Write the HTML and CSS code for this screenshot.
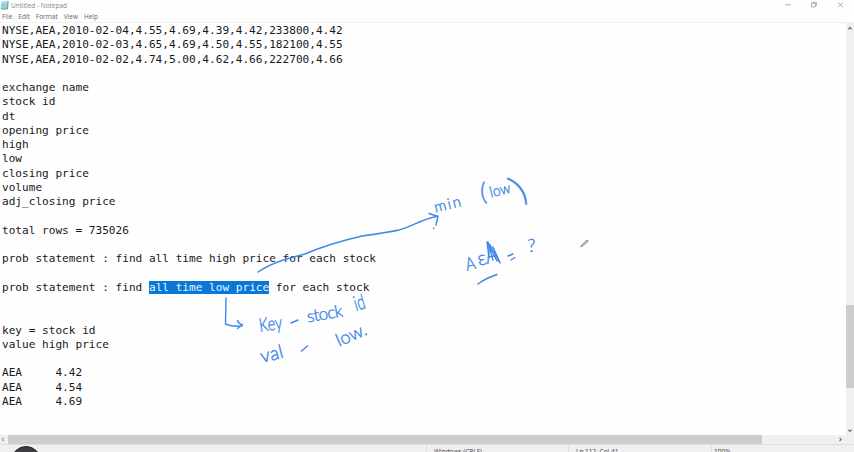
FILE: index.html
```html
<!DOCTYPE html>
<html lang="en">
<head>
<meta charset="utf-8">
<title>Untitled - Notepad</title>
<link rel="stylesheet" href="styles.css">
</head>
<body>
<div class="window">
  <header class="titlebar">
    <svg class="app-icon" width="9" height="10" viewBox="0 0 9 10"><path d="M1.5 1.2 8 .8 7.4 8.8 .6 8.4z" fill="#91cfe0"/><path d="M1.8 2h6" stroke="#d9edf2"/><path d="M8.2 1 7.5 9 1 8.9" fill="none" stroke="#5c7880" stroke-width=".8"/></svg>
    <span class="title">Untitled - Notepad</span>
    <svg class="controls" width="70" height="11" viewBox="0 0 70 11" fill="none" stroke="#999" stroke-width=".8"><path d="M1.5 4.8h5.500M27.500 3.200h3.700v3.800h-3.700zM28.700 3V2.200h3.600V6h-1M54 2.300l5 5M59 2.300l-5 5"/></svg>
  </header>
  <nav class="menu"><span>File</span><span>Edit</span><span>Format</span><span>View</span><span>Help</span></nav>
  <div class="body">
    <pre class="editor">NYSE,AEA,2010-02-04,4.55,4.69,4.39,4.42,233800,4.42
NYSE,AEA,2010-02-03,4.65,4.69,4.50,4.55,182100,4.55
NYSE,AEA,2010-02-02,4.74,5.00,4.62,4.66,222700,4.66

exchange name
stock id
dt
opening price
high
low
closing price
volume
adj_closing price

total rows = 735026

prob statement : find all time high price for each stock

prob statement : find <span class="selected">all time low price</span> for each stock


key = stock id
value high price

AEA	4.42
AEA	4.54
AEA	4.69</pre>
    <div class="vscroll">
      <svg width="8" height="10" viewBox="0 0 8 10"><path d="M2.3 6.200 4 4.500l1.700 1.700" fill="none" stroke="#777" stroke-width="1.300"/></svg>
      <div class="vthumb"></div>
      <svg width="8" height="10" viewBox="0 0 8 10"><path d="M2.3 4.700 4 6.400l1.700-1.700" fill="none" stroke="#777" stroke-width="1.300"/></svg>
    </div>
  </div>
  <div class="hscroll">
    <svg width="8" height="9" viewBox="0 0 8 9"><path d="M3.8 2.800 2.200 4.500l1.600 1.700" fill="none" stroke="#777"/></svg>
    <div class="hthumb"></div>
    <svg class="right" width="8" height="9" viewBox="0 0 8 9"><path d="M2.500 2.800l1.700 1.700L2.500 6.200" fill="none" stroke="#777" stroke-width="1.200"/></svg>
  </div>
  <footer class="status">
    <span class="bubble"></span>
    <span class="cell enc">Windows (CRLF)</span>
    <span class="cell pos">Ln 112, Col 41</span>
    <span class="cell zoom">100%</span>
  </footer>
  <svg class="ink" width="854" height="452" viewBox="0 0 854 452">
    <g class="strokes">
      <path d="M258 272C273 262 289 258 305 254Q328 244 362 236C377 234 390 232 399 230C411 227 422 219 438 216M429 213.500L438 216.500L436 225M433.500 228.200h.5"/>
      <path d="M226 298L225.500 324Q232 327 242 326M237.500 320.500Q239 324 242.500 325L237.500 328.500"/>
      <path d="M478 284Q486 278 497 274.500M508 256l5-2M511 260l4-2.500M487 242l2 15M488 242l5 18M489 245l8 16M493 247l7 16"/>
      <path d="M291 323l7-3M301.500 351l6-5"/>
    </g>
    <g class="words">
      <text transform="translate(435.500 212.500) rotate(-14)" font-size="15" textLength="27">min</text>
      <text transform="translate(481 201) rotate(-6)" font-size="25">(</text>
      <text transform="translate(491 197.500) rotate(-14)" font-size="15" textLength="21" lengthAdjust="spacingAndGlyphs">low</text>
      <text transform="translate(522 202) rotate(-36)" font-size="37">)</text>
      <text transform="translate(467 271) rotate(-14)" font-size="18" textLength="10" lengthAdjust="spacingAndGlyphs">A</text>
      <text transform="translate(479 266) rotate(-14)" font-size="20">ε</text>
      <text transform="translate(487 264) rotate(-12)" font-size="27" textLength="13" lengthAdjust="spacingAndGlyphs">A</text>
      <text transform="translate(528 252) rotate(-3)" font-size="18">?</text>
      <text transform="translate(260 332) rotate(-8)" font-size="19" textLength="23" lengthAdjust="spacingAndGlyphs">Key</text>
      <text transform="translate(308 322.500) rotate(-10)" font-size="17" textLength="36">stock</text>
      <text transform="translate(356 311) rotate(-16)" font-size="21" textLength="11" lengthAdjust="spacingAndGlyphs">id</text>
      <text transform="translate(262 363) rotate(-14)" font-size="19" textLength="23">val</text>
      <text transform="translate(339 347) rotate(-24)" font-size="18" textLength="32" lengthAdjust="spacingAndGlyphs">low.</text>
    </g>
    <path d="M580.500 247l2-3 4.500-4 1.500 1-5 4.500z" fill="#bbb" stroke="#777" stroke-width=".6"/>
  </svg>
</div>
</body>
</html>
```
FILE: styles.css
```css
* { box-sizing: border-box; }
body { margin: 0; overflow: hidden; background: #fefefe; }
svg { display: block; }
.window {
  position: relative;
  width: 854px;
  height: 452px;
  display: flex;
  flex-direction: column;
  overflow: hidden;
  font-family: "Open Sans", sans-serif;
}
.titlebar { display: flex; height: 11px; flex: none; align-items: flex-start; }
.title { margin-left: 2px; font-size: 6.5px; line-height: 11px; color: #858585; }
.controls { margin-left: auto; width: 70px; }
.menu {
  display: flex;
  flex: none;
  height: 11px;
  padding-left: 2px;
  gap: 6px;
  font-size: 6.5px;
  line-height: 12px;
  color: #666;
}
.body { display: flex; height: 413px; flex: none; border-top: 1px solid #f1f1f1; }
.editor {
  flex: 1;
  margin: 0;
  padding: 1px 0 0 2px;
  font-family: "DejaVu Sans Mono", monospace;
  font-size: 11.1px;
  line-height: 14.27px;
  tab-size: 8;
  color: #191919;
}
.selected { background: #0878d8; color: #e8f4ff; }
.vscroll { display: flex; flex-direction: column; width: 8px; background: #f0eff1; }
.vthumb { height: 83px; margin-top: 272px; margin-bottom: auto; background: #cdcccf; }
.hscroll { display: flex; flex: none; height: 10px; background: #f0eff1; border-bottom: 1px solid #dedddf; }
.hthumb { width: 754px; background: #cdcccf; }
.right { margin-left: auto; margin-right: 9px; }
.status { display: flex; flex: 1; min-height: 0; background: #f0eff1; overflow: hidden; }
.bubble { width: 30px; height: 30px; margin: 1px 0 0 11px; border-radius: 50%; background: #3b3c40; border: 1px solid #222; flex: none; }
.cell { flex: none; border-left: 1px solid #dddce0; padding-left: 7px; font-size: 6.5px; line-height: 13px; color: #444; }
.enc { width: 142px; margin-left: 385px; }
.pos { width: 143px; }
.zoom { flex: 1; padding-left: 2px; }
.ink { position: absolute; left: 0; top: 0; pointer-events: none; }
.strokes { fill: none; stroke: #4087e6; stroke-width: 1.4; stroke-linecap: round; stroke-linejoin: round; }
.words { font-family: Lato, sans-serif; font-weight: 300; fill: #3a84e6; stroke: #3a84e6; stroke-width: .4; }
```
